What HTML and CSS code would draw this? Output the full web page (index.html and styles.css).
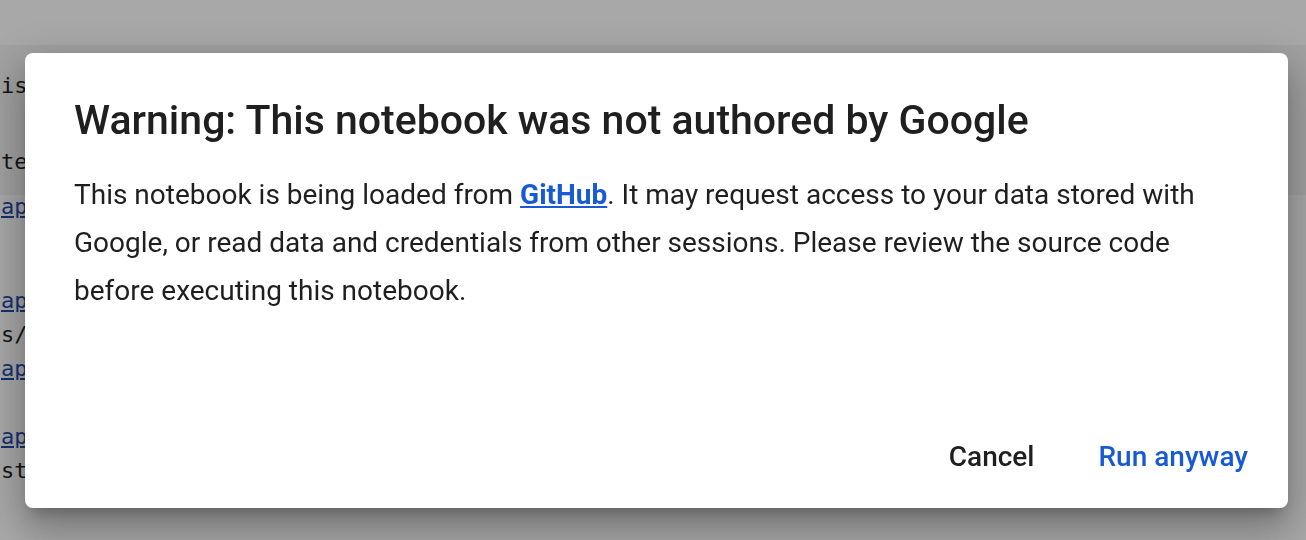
FILE: index.html
```html
<!DOCTYPE html>
<html>
<head>
<meta charset="utf-8">
<link rel="stylesheet" href="styles.css">
</head>
<body>
<div class="page">
  <div class="topbar"></div>
  <div class="cell cell-code">
    <div class="code-line l1">ist</div>
    <div class="code-line l2">tex</div>
  </div>
  <div class="cell cell-text">
    <div class="code-line l3"><a href="#">api</a></div>
    <div class="code-line l4"><a href="#">api</a></div>
    <div class="code-line">s/n</div>
    <div class="code-line"><a href="#">api</a></div>
    <div class="code-line l7"><a href="#">api</a></div>
    <div class="code-line">sto</div>
  </div>
</div>
<div class="overlay">
  <div class="dialog">
    <h1 class="title">Warning: This notebook was not authored by Google</h1>
    <p class="body">This notebook is being loaded from <a class="link" href="#">GitHub</a>. It may request access to your data stored with Google, or read data and credentials from other sessions. Please review the source code before executing this notebook.</p>
    <div class="actions">
      <button class="btn btn-cancel">Cancel</button>
      <button class="btn btn-run">Run anyway</button>
    </div>
  </div>
</div>
</body>
</html>
```

FILE: styles.css
```css
* { box-sizing: border-box; }
html, body { margin: 0; padding: 0; }
body {
  width: 1306px;
  height: 540px;
  overflow: hidden;
  background: #ffffff;
  font-family: Roboto, "Liberation Sans", sans-serif;
}
.page {
  display: flex;
  flex-direction: column;
}
.topbar {
  height: 45px;
  background: #ffffff;
}
.cell-code {
  background: #f4f4f4;
  height: 150px;
  padding-top: 24px;
}
.cell-text {
  margin-top: -5px;
}
.code-line {
  font-family: "DejaVu Sans Mono", "Liberation Mono", monospace;
  font-size: 22px;
  line-height: 34px;
  color: #1e1e1e;
  white-space: nowrap;
  padding-left: 1px;
}
.l2 { margin-top: 42px; }
.l4 { margin-top: 60px; }
.l7 { margin-top: 34px; }
.code-line a { color: #1f4bab; text-decoration: underline; }

.overlay {
  position: fixed;
  inset: 0;
  background: rgba(0, 0, 0, 0.34);
  padding: 53px 18px 0 25px;
}
.dialog {
  width: 1263px;
  height: 455px;
  background: #ffffff;
  border-radius: 8px;
  padding: 43px 40px 27px 49px;
  display: flex;
  flex-direction: column;
  box-shadow: 0 11px 15px -7px rgba(0,0,0,.24), 0 24px 38px 3px rgba(0,0,0,.18), 0 9px 46px 8px rgba(0,0,0,.14);
}
.title {
  margin: 0;
  font-size: 41px;
  font-weight: 500;
  line-height: 48px;
  color: #1f1f1f;
  white-space: nowrap;
}
.body {
  margin: 27px 0 0 0;
  font-size: 28px;
  line-height: 48px;
  color: #1f1f1f;
  padding-right: 30px;
}
.link {
  color: #185ad4;
  font-weight: 700;
  text-decoration: underline;
}
.actions {
  margin-top: auto;
  display: flex;
  justify-content: flex-end;
  gap: 32px;
}
.btn {
  border: none;
  background: none;
  font-family: Roboto, "Liberation Sans", sans-serif;
  font-size: 28px;
  font-weight: 500;
  padding: 8px 0 8px 32px;
  line-height: 32px;
}
.btn-cancel { color: #1f1f1f; }
.btn-run { color: #185ad4; }
```
